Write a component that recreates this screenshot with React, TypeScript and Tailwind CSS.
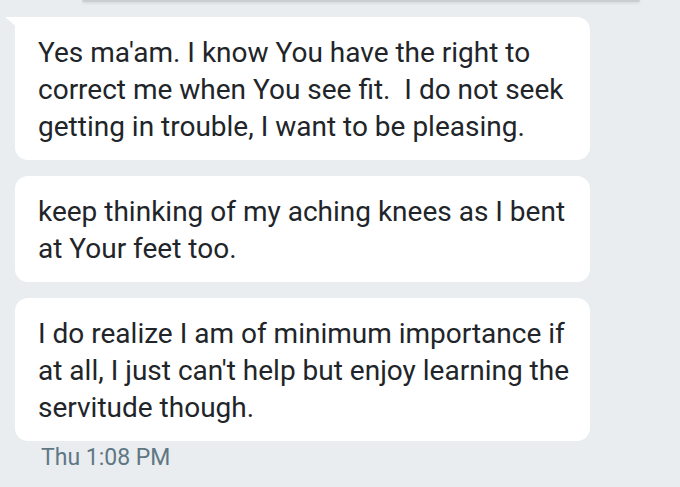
const messages = [
  "Yes ma'am. I know You have the right to correct me when You see fit.\u00a0 I do not seek getting in trouble, I want to be pleasing.",
  "keep thinking of my aching knees as I bent at Your feet too.",
  "I do realize I am of minimum importance if at all, I just can't help but enjoy learning the servitude though.",
];

function Bubble({ text, first }: { text: string; first: boolean }) {
  return (
    <div className="relative">
      {first && (
        <div className="absolute left-[-10px] top-0 h-[12px] w-[14px] bg-white [clip-path:polygon(0_0,100%_0,100%_100%)]" />
      )}
      <div
        className={`w-[575px] rounded-[13px] bg-white pl-[23px] pr-4 pt-[17px] pb-[15px] text-[28px] leading-[37px] text-[#212529] ${
          first ? 'rounded-tl-none' : ''
        }`}
      >
        {text}
      </div>
    </div>
  );
}

export default function App() {
  return (
    <div className="h-[487px] w-[680px] overflow-hidden bg-[#e9edf0] font-['Roboto',sans-serif]">
      <div className="ml-[82px] h-[2px] w-[558px] rounded-b-sm bg-[#c9ced3] shadow-[0_1px_3px_rgba(0,0,0,0.12)]" />
      <div className="flex flex-col gap-4 pl-[15px] pt-[15px]">
        {messages.map((m, i) => (
          <Bubble key={i} text={m} first={i === 0} />
        ))}
      </div>
      <div className="pl-[41px] pt-[2px] text-[23px] leading-[30px] text-[#5f7784]">Thu 1:08 PM</div>
    </div>
  );
}
